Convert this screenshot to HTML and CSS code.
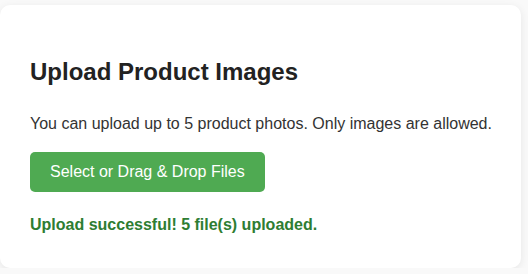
FILE: index.html
```html
<!doctype html>
<html>
<meta name="viewport" content="width=device-width, initial-scale=1">

<head>
  <title>Upload Product Images</title>
  <link rel="stylesheet" href="styles.css">
</head>

<body>
  <div class="card">
    <h2>Upload Product Images</h2>
    <p class="hint">You can upload up to 5 product photos. Only images are allowed.</p>
    <div class="drop">
      <button class="button" id="pick">Select or Drag &amp; Drop Files</button>
    </div>
    <p class="status">Upload successful! 5 file(s) uploaded.</p>
  </div>
</body>

</html>
```

FILE: styles.css
```css
body {
  margin: 0;
  padding: 5px 7px 0 0;
  background: #f9f9f9;
  font: 16px/1.6 "Liberation Sans", Arial, sans-serif;
  color: #333;
}

/* white box around the uploader */
.card {
  background: #fff;
  border-radius: 10px;
  padding: 30px 10px 30px 30px;
  height: 203px;
  box-shadow: 0 2px 8px rgba(0, 0, 0, 0.08);
}

.card h2 {
  font-size: 24px;
  margin: 18px 0 20px;
  color: #222;
}

.hint {
  margin: 0 0 15px;
  white-space: nowrap;
}

.button {
  background-color: #4FAA52;
  border: none;
  color: white;
  padding: 11px 20px;
  line-height: 19px;
  border-radius: 5px;
  cursor: pointer;
  font: 16px "Liberation Sans", Arial, sans-serif;
}

.button:hover {
  background-color: #43a047;
}

.status {
  margin: 20px 0 0;
  font-weight: bold;
  color: #2e7d32;
}
```
